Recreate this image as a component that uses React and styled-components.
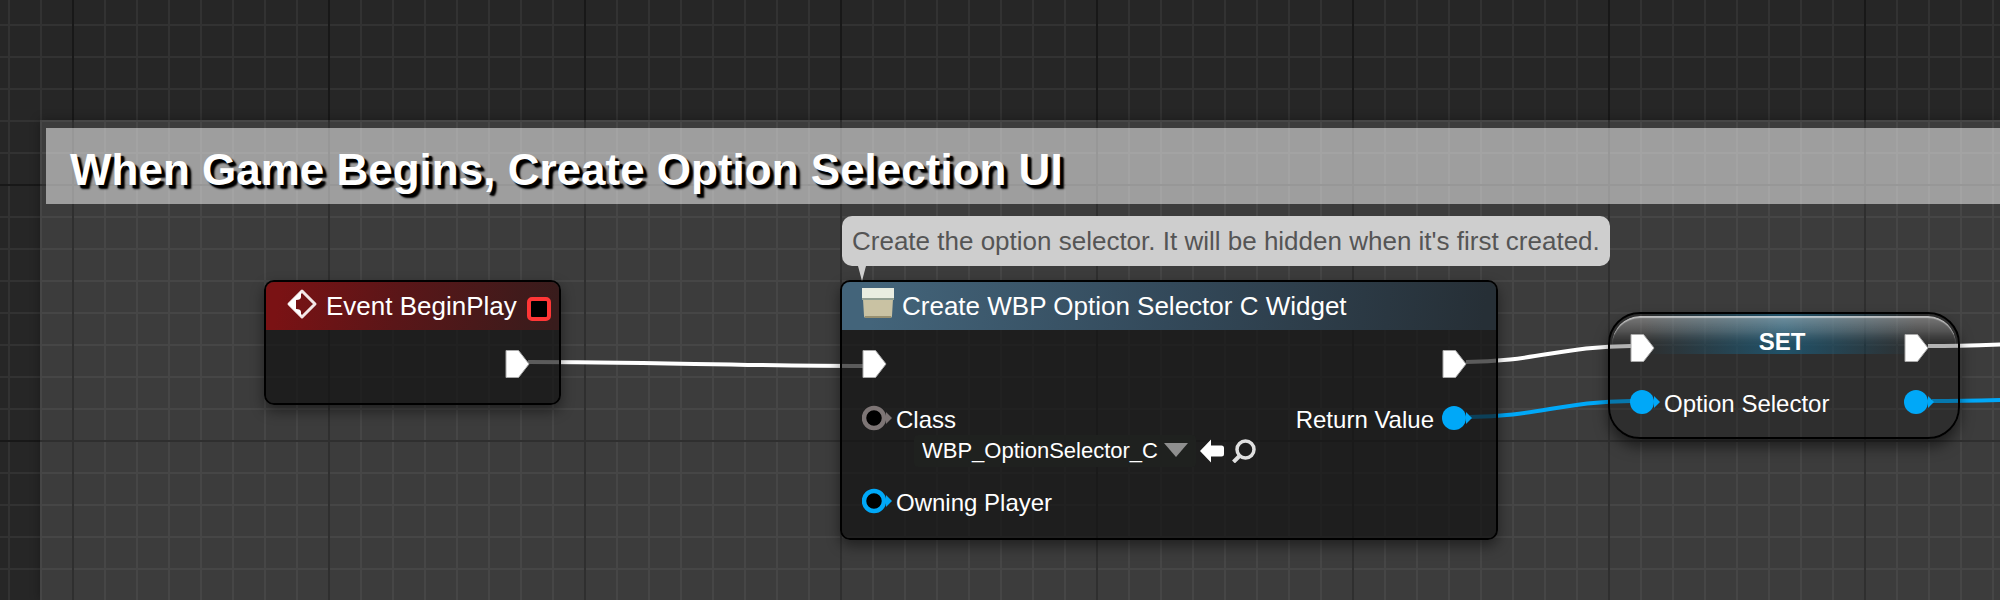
import React from "react";
import styled, { createGlobalStyle, css } from "styled-components";

const GlobalStyle = createGlobalStyle`
  *, *::before, *::after { box-sizing: border-box; }
  body {
    margin: 0;
    background: #262626;
    font-family: "Liberation Sans", Arial, sans-serif;
    color: #fff;
  }
`;

const gridLines = (angle, color, size) =>
  `linear-gradient(${angle}, ${color} 2px, transparent 2px) 8px 24px / ${size} ${size}`;

const Canvas = styled.main`
  position: relative;
  min-height: 100vh;
  overflow: hidden;
  background:
    linear-gradient(90deg, #181818 2px, transparent 2px) 72px 0 / 256px 256px,
    linear-gradient(180deg, #181818 2px, transparent 2px) 0 184px / 256px 256px,
    ${gridLines("90deg", "#323232", "32px")},
    ${gridLines("180deg", "#323232", "32px")},
    #262626;
`;

const Comment = styled.section`
  position: absolute;
  inset: 120px 0 0 40px;
  padding: 8px 0 0 6px;
  background: rgba(255, 255, 255, 0.1);
  box-shadow: 0 0 10px rgba(0, 0, 0, 0.3);
`;

const CommentTitle = styled.h1`
  margin: 0;
  padding: 8px 24px 0;
  font-size: 44px;
  line-height: 68px;
  white-space: nowrap;
  background: rgba(255, 255, 255, 0.5);
  text-shadow: 3px 3px 1px #000, 4px 4px 2px #000;
`;

const Wires = styled.svg`
  position: absolute;
  inset: 0;
  width: 100%;
  height: 100%;
  fill: none;
  stroke-width: 4;
`;

const Placed = styled.div`
  position: absolute;
  left: ${(p) => p.$x}px;
  top: ${(p) => p.$y}px;
  width: ${(p) => p.$w}px;
`;

const Node = styled(Placed)`
  border: 2px solid #000;
  border-radius: 10px;
  overflow: hidden;
  background: rgba(17, 17, 17, 0.69);
  background-clip: padding-box;
  box-shadow: 0 6px 14px rgba(0, 0, 0, 0.45);
`;

const tones = {
  event: "linear-gradient(100deg, #7a1214 5%, #5a1618 45%, #381c1c 98%)",
  call: "linear-gradient(96deg, #43647a 5%, #33495a 50%, #262f36 98%)",
};

const NodeHeader = styled.header`
  display: flex;
  align-items: center;
  gap: 8px;
  height: 48px;
  padding: 0 8px 0 20px;
  background: ${(p) => tones[p.$tone]};
`;

const NodeTitle = styled.h2`
  margin: 0;
  flex: 1;
  min-width: 0;
  font-size: 26px;
  font-weight: 400;
  white-space: nowrap;
`;

const NodeBody = styled.div`
  display: flex;
  justify-content: ${(p) => (p.$end ? "flex-end" : "space-between")};
  padding: 19px 24px ${(p) => (p.$end ? 24 : 22)}px 20px;
`;

const PinColumn = styled.div`
  display: flex;
  flex-direction: column;
  gap: 24px;
  align-items: ${(p) => (p.$end ? "flex-end" : "flex-start")};
`;

const PinGroup = styled.div`
  display: flex;
  flex-direction: column;
  gap: 19px;
`;

const PinField = styled.div`
  display: flex;
  flex-direction: column;
  gap: 2px;
`;

const PinRow = styled.div`
  display: flex;
  align-items: center;
  gap: ${(p) => (p.$out ? 8 : 4)}px;
  height: 30px;
`;

const labelText = css`
  padding-top: 4px;
  font-size: 24px;
  line-height: 26px;
  white-space: nowrap;
`;
const PinName = styled.span`${labelText}`;
const PinLabel = styled.label`${labelText}`;

const FieldRow = styled.div`
  display: flex;
  align-items: center;
  padding-left: 52px;
`;

const SelectWrap = styled.div`
  position: relative;
  margin-right: 4px;
`;

const ClassSelect = styled.select`
  display: block;
  appearance: none;
  width: 282px;
  height: 32px;
  padding: 0 32px 2px 8px;
  border: 0;
  border-radius: 4px;
  background: #1f211f;
  color: #fff;
  font: 22px "Liberation Sans", Arial, sans-serif;
`;

const Caret = styled.svg`
  position: absolute;
  top: 8px;
  right: 8px;
  pointer-events: none;
`;

const IconButton = styled.button`
  display: flex;
  margin: 0 8px 0 0;
  padding: 0;
  border: 0;
  background: none;
`;

const Bubble = styled(Placed)`
  width: auto;
  padding: 0 10px;
  border-radius: 10px;
  background: #cecece;
  color: #555;
  font-size: 26px;
  line-height: 50px;
  white-space: nowrap;
`;

const Tail = styled.svg`
  position: absolute;
  left: 16px;
  top: 100%;
`;

const SetNode = styled(Placed)`
  display: flex;
  flex-direction: column;
  gap: 24px;
  padding: 19px 24px 20px 20px;
  border: 2px solid #000;
  border-radius: 32px;
  background:
    linear-gradient(90deg, transparent 10%, rgba(30, 88, 115, 0.85) 50%, transparent 88%) 0 0 / 100% 40px no-repeat,
    rgba(20, 20, 20, 0.32);
  background-clip: padding-box;
  box-shadow: 0 8px 14px rgba(0, 0, 0, 0.5);

  &::before {
    content: "";
    position: absolute;
    inset: 2px 2px auto;
    height: 60px;
    border-radius: 28px 28px 0 0;
    background: linear-gradient(180deg, rgba(255, 255, 255, 0.36), transparent 30px);
    box-shadow: inset 0 2px 1px rgba(255, 255, 255, 0.5);
    mask-image: linear-gradient(180deg, #000 16px, transparent 36px);
  }
`;

const SetRow = styled(PinRow)`
  position: relative;
  justify-content: space-between;
`;

const SetTitle = styled.h2`
  align-self: flex-start;
  margin: 0;
  font-size: 24px;
  line-height: 18px;
`;

const BLUE = "#00a8f8";

const ExecPin = () => (
  <svg width="30" height="30" viewBox="0 0 30 30" aria-hidden="true">
    <path d="M1 1.5H13.5L24 15L13.5 28.5H1Z" fill="#fff" stroke="#aaa" strokeWidth="1" strokeLinejoin="round" />
  </svg>
);

const DataPin = ({ color = BLUE, hollow }) => (
  <svg width="30" height="30" viewBox="0 0 30 30" aria-hidden="true">
    <path d="M24 9L30 15L24 21Z" fill={color} />
    {hollow ? (
      <circle cx="12" cy="15" r="10" fill="#000" stroke={color} strokeWidth="4.5" />
    ) : (
      <circle cx="12" cy="15" r="12" fill={color} />
    )}
  </svg>
);

const EventIcon = () => (
  <svg width="32" height="48" viewBox="0 0 32 48" aria-hidden="true">
    <path d="M16 9L29 22L16 35L3 22Z" fill="none" stroke="#f3e6e6" strokeWidth="3" strokeLinejoin="round" />
    <path d="M2 22L15 9.500V15Q15 18 10 18V27Q15 27 15 30V34.500Z" fill="#fff" />
  </svg>
);

const DelegatePin = () => (
  <svg width="24" height="48" viewBox="0 0 24 48" aria-hidden="true">
    <rect x="2" y="17" width="20" height="20" rx="3" fill="#000" stroke="#ff3636" strokeWidth="4" />
  </svg>
);

const WidgetIcon = () => (
  <svg width="32" height="48" viewBox="0 0 32 48" aria-hidden="true">
    <rect x="0" y="6" width="32" height="11" fill="#e9ede1" />
    <path d="M1 17H31L30 34Q30 36 28 36H4Q2 36 2 34Z" fill="#c9c2a3" />
    <path d="M0 17H32" stroke="#93a093" strokeWidth="2" />
    <path d="M3 35H29" stroke="#989070" strokeWidth="2" />
  </svg>
);

export default function App() {
  return (
    <>
      <GlobalStyle />
      <Canvas>
        <Comment>
          <CommentTitle>When Game Begins, Create Option Selection UI</CommentTitle>
        </Comment>

        <Wires aria-hidden="true">
          <g stroke="#fff">
            <path d="M528 362C640 362 750 366 863 366" />
            <path d="M1466 362C1532 362 1564 346 1631 346" />
            <path d="M1928 346C1980 346 2010 344 2080 341" />
          </g>
          <g stroke={BLUE}>
            <path d="M1470 417C1534 417 1566 401 1631 401" />
            <path d="M1932 401C1980 401 2010 400 2080 397" />
          </g>
        </Wires>

        <Node $x={264} $y={280} $w={297}>
          <NodeHeader $tone="event">
            <EventIcon />
            <NodeTitle>Event BeginPlay</NodeTitle>
            <DelegatePin />
          </NodeHeader>
          <NodeBody $end>
            <PinRow><ExecPin /></PinRow>
          </NodeBody>
        </Node>

        <Node $x={840} $y={280} $w={658}>
          <NodeHeader $tone="call">
            <WidgetIcon />
            <NodeTitle>Create WBP Option Selector C Widget</NodeTitle>
          </NodeHeader>
          <NodeBody>
            <PinColumn>
              <PinRow><ExecPin /></PinRow>
              <PinGroup>
                <PinField>
                  <PinRow>
                    <DataPin color="#7d7575" hollow />
                    <PinLabel htmlFor="widget-class">Class</PinLabel>
                  </PinRow>
                  <FieldRow>
                    <SelectWrap>
                      <ClassSelect id="widget-class">
                        <option>WBP_OptionSelector_C</option>
                      </ClassSelect>
                      <Caret width="24" height="14" viewBox="0 0 24 14" aria-hidden="true">
                        <path d="M0 0H24L12 14Z" fill="#8f8f8f" />
                      </Caret>
                    </SelectWrap>
                    <IconButton type="button" aria-label="Use selected asset">
                      <svg width="24" height="24" viewBox="0 0 24 24">
                        <path d="M0 12L11 0.500V6.500H21.500Q24 6.500 24 9V15Q24 17.500 21.500 17.500H11V23.500Z" fill="#fff" />
                      </svg>
                    </IconButton>
                    <IconButton type="button" aria-label="Browse to asset">
                      <svg width="24" height="24" viewBox="0 0 24 24" fill="none" stroke="#e0e0e0">
                        <circle cx="13.500" cy="10.500" r="8.500" strokeWidth="3.500" />
                        <path d="M8 16.500L1.500 23" strokeWidth="4" />
                      </svg>
                    </IconButton>
                  </FieldRow>
                </PinField>
                <PinRow>
                  <DataPin hollow />
                  <PinName>Owning Player</PinName>
                </PinRow>
              </PinGroup>
            </PinColumn>
            <PinColumn $end>
              <PinRow><ExecPin /></PinRow>
              <PinRow $out>
                <PinName>Return Value</PinName>
                <DataPin />
              </PinRow>
            </PinColumn>
          </NodeBody>
        </Node>

        <Bubble $x={842} $y={216}>
          Create the option selector. It will be hidden when it's first created.
          <Tail width="8" height="15" viewBox="0 0 8 15" aria-hidden="true">
            <path d="M0 0H8L4 15Z" fill="#cecece" />
          </Tail>
        </Bubble>

        <SetNode $x={1608} $y={312} $w={352}>
          <SetRow>
            <ExecPin />
            <SetTitle>SET</SetTitle>
            <ExecPin />
          </SetRow>
          <SetRow>
            <PinRow>
              <DataPin />
              <PinName>Option Selector</PinName>
            </PinRow>
            <DataPin />
          </SetRow>
        </SetNode>
      </Canvas>
    </>
  );
}
